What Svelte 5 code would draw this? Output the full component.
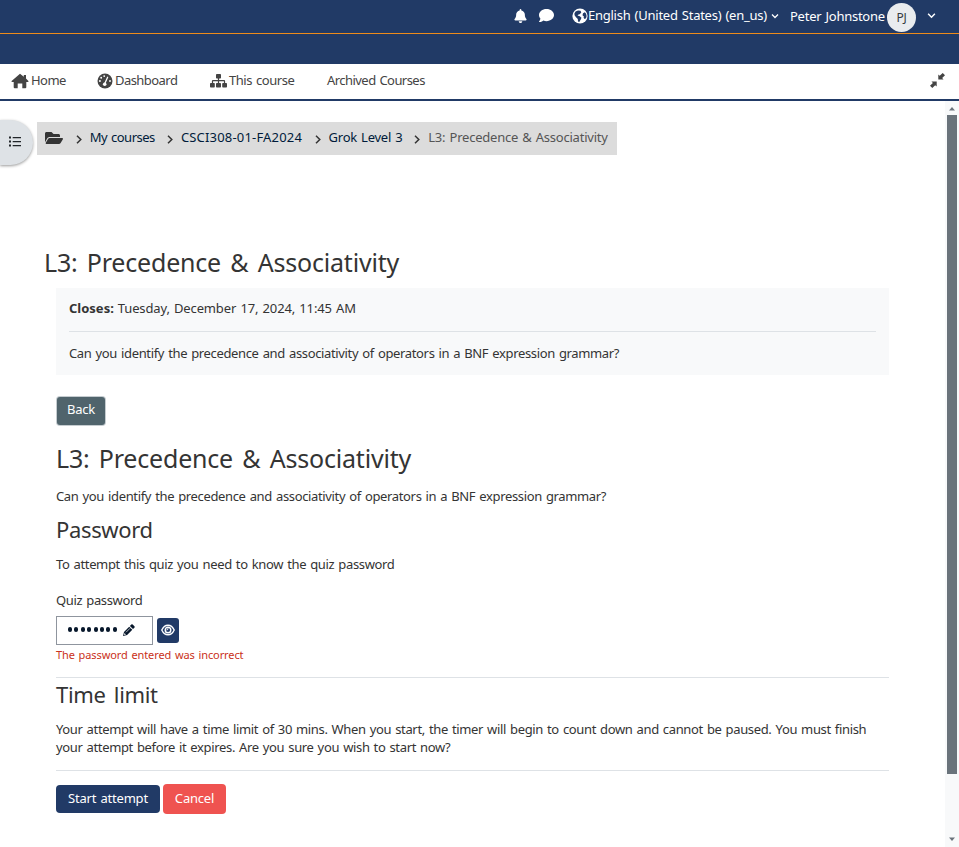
<script>
  const crumbs = [
    { label: 'My courses', width: 64.5, spacing: -0.5 },
    { label: 'CSCI308-01-FA2024', width: 121, spacing: 0.18 },
    { label: 'Grok Level 3', width: 73, spacing: -0.25 },
    { label: 'L3: Precedence & Associativity', width: 180, spacing: -0.22, current: true }
  ];
  const title = 'L3: Precedence & Associativity';
  const intro = 'Can you identify the precedence and associativity of operators in a BNF expression grammar?';
</script>

{#snippet chevron(size)}
  <svg width={size} height={size} viewBox="0 0 8 8" fill="none" stroke="currentColor" stroke-width="1.3"><path d="M1 2.5l3 3 3-3" /></svg>
{/snippet}

<div class="page">
  <header class="top">
    <svg class="bell" width="13" height="14" viewBox="0 0 448 512" fill="currentColor"><path d="M224 0c-17.7 0-32 14.3-32 32V51.2C119 66 64 130.6 64 208v18.8c0 47-17.3 92.4-48.5 127.6l-7.4 8.3c-8.4 9.4-10.4 22.9-5.3 34.4S19.4 416 32 416H416c12.6 0 24-7.4 29.2-18.9s3.1-25-5.3-34.4l-7.4-8.3C401.3 319.2 384 273.9 384 226.8V208c0-77.4-55-142-128-156.8V32c0-17.7-14.3-32-32-32zm45.3 493.3c12-12 18.7-28.3 18.7-45.3H160c0 17 6.7 33.3 18.7 45.3s28.3 18.7 45.3 18.7s33.3-6.7 45.3-18.7z" /></svg>
    <svg class="comment" width="15" height="15" viewBox="0 0 512 512" fill="currentColor"><path d="M512 240c0 114.9-114.6 208-256 208c-37.1 0-72.3-6.4-104.1-17.9c-11.9 8.7-31.3 20.6-54.3 30.6C73.6 471.1 44.7 480 16 480c-6.5 0-12.3-3.9-14.8-9.9c-2.5-6-1.1-12.8 3.4-17.4c6-6 13-14 21.7-28.7c10-16.6 19.5-38.4 21.4-62.9C17.7 326.8 0 285.1 0 240C0 125.1 114.6 32 256 32s256 93.1 256 208z" /></svg>
    <svg class="globe" width="16" height="16" viewBox="0 0 16 16"><circle cx="8" cy="8" r="7.6" fill="#fff" /><path fill="#213a66" d="M3.600 3.600L6 2.500l2.500.3.800 1.800-1.600 1.600-1.200.2-1 1.200 2.300.7 1.700 1.400-.6 1.600-1.600 2.700-1.300-.6-.2-2.300L4 9.300 2.600 7.200l-.2-1.600z" /><path fill="#213a66" d="M11 5.300l1.800-1 1.300 1.500.5 2.200-.5 2.300-1.500.8-1-1.300.3-1.300-1.400-1.200z" /></svg>
    <span class="lang">English (United States) (en_us)</span>
    {@render chevron(8)}
    <span class="user">Peter Johnstone</span>
    <span class="avatar">PJ</span>
    <span class="caret">{@render chevron(9)}</span>
  </header>
  <div class="band"></div>
  <nav>
    <a class="home" href="#home">
      <svg width="18" height="16" viewBox="0 0 18 16" fill="currentColor"><path d="M9 .7L.6 8q-.5 1 .5 1.100H2.700v5.100q0 1 1 1H6.700V10.500h4.600v4.700h3q1 0 1-1V9.100h1.600q1-.1.5-1.100L15 5.600V2h-2.200v1.700z" /></svg>
      <span>Home</span>
    </a>
    <a class="dash" href="#dashboard">
      <svg width="16" height="16" viewBox="0 0 16 16"><circle cx="8" cy="8" r="7.500" fill="currentColor" /><path d="M7.600 11L10.600 4.300" stroke="#fff" stroke-width="1.300" stroke-linecap="round" /><g fill="#fff"><circle cx="7.700" cy="11.300" r="1.800" /><circle cx="7.200" cy="3.100" r=".95" /><circle cx="4.200" cy="4.800" r=".95" /><circle cx="2.900" cy="8" r=".95" /><circle cx="13" cy="8" r=".95" /></g></svg>
      <span>Dashboard</span>
    </a>
    <a class="course" href="#course">
      <svg width="17" height="14" viewBox="0 0 17 14" fill="currentColor"><rect x="6" y="0" width="5" height="4.500" rx=".8" /><rect x="0" y="9" width="4.800" height="4.500" rx=".8" /><rect x="6" y="9" width="5" height="4.500" rx=".8" /><rect x="12.200" y="9" width="4.800" height="4.500" rx=".8" /><path d="M7.900 4h1.200v2.100h5q1 0 1 1V9.500h-1.200V7.300H9.100v2.200H7.900V7.300H3.100v2.200H1.900V7.100q0-1 1-1h5z" /></svg>
      <span>This course</span>
    </a>
    <a class="archive" href="#archive"><span>Archived Courses</span></a>
    <svg class="compress" width="15" height="15" viewBox="0 0 15 15" fill="currentColor"><path d="M8.300 1.500l1.400 1.300L12.700 0 15 2.200l-2.800 2.700L13.500 6.500H8.300zM1.500 8.500H6.700v5l-1.500-1.300L2.300 15 0 12.800l2.900-2.700z" /></svg>
  </nav>

  <div class="body">
    <main>
      <div class="crumbrow">
        <button class="drawer" aria-label="Open course index">
          <svg width="12" height="11" viewBox="0 0 12 11" fill="#212529"><path d="M0 .5h2v2H0zM0 4.500h2v2H0zM0 8.500h2v2H0zM3.700 1H12v1.200H3.700zM3.700 5H12v1.200H3.700zM3.700 9H12v1.200H3.700z" /></svg>
        </button>
        <div class="crumbs">
          <svg width="18" height="16" viewBox="0 0 576 512" fill="#343434"><path d="M572.694 292.093L500.270 416.248A63.997 63.997 0 0 1 444.989 448H45.025c-18.523 0-30.064-20.093-20.731-36.093l72.424-124.155A64 64 0 0 1 152 256h399.964c18.523 0 30.064 20.093 20.730 36.093zM152 224h328v-48c0-26.510-21.490-48-48-48H272l-64-64H48C21.490 64 0 85.490 0 112v278.046l69.077-118.418C86.214 242.250 117.989 224 152 224z" /></svg>
          {#each crumbs as c}
            <svg class="sep" width="6" height="9" viewBox="0 0 6 9" fill="none" stroke="#333" stroke-width="1.500"><path d="M1 .8l3.800 3.700L1 8.200" /></svg>
            <span class="crumb" class:current={c.current} style:width="{c.width}px" style:letter-spacing="{c.spacing}px">{c.label}</span>
          {/each}
        </div>
      </div>

      <h1>{title}</h1>
      <section class="info">
        <p class="dates"><strong>Closes:</strong> <span>Tuesday, December 17, 2024, 11:45 AM</span></p>
        <p class="copy">{intro}</p>
      </section>
      <div class="quiz">
        <button class="back">Back</button>
        <h2>{title}</h2>
        <p class="copy intro">{intro}</p>
        <h3>Password</h3>
        <p class="need">To attempt this quiz you need to know the quiz password</p>
        <p class="label">Quiz password</p>
        <div class="pwrow">
          <div class="field">
            <span class="dots">{#each Array(8) as _}<i></i>{/each}</span>
            <svg width="12" height="12" viewBox="0 0 12 12"><path fill="#07172b" d="M8.300.6q.7-.7 1.400 0l1.700 1.700q.6.7 0 1.400L10 5.100 6.900 2zM6.200 2.700l3.100 3.100-5.200 5.200L0 12l1-4.100z" /><path d="M3 8.300l4-4" stroke="#fff" stroke-width=".7" /><path d="M1.500 9l1.500 1.500-2 .5z" fill="#fff" /></svg>
          </div>
          <button class="eye" aria-label="Reveal password">
            <svg width="14" height="12" viewBox="0 0 14 12" fill="none" stroke="#fff" stroke-width="1.400"><path d="M.8 6Q3 1.200 7 1.200T13.200 6Q11 10.800 7 10.800T.8 6z" /><circle cx="7" cy="6" r="2.800" /><path d="M5.400 6q1.700.1 1.600-1.700" stroke-width="1" /></svg>
          </button>
        </div>
        <p class="error">The password entered was incorrect</p>
        <h3 class="ruled">Time limit</h3>
        <p class="limit">Your attempt will have a time limit of 30 mins. When you start, the timer will begin to count down and cannot be paused. You must finish<br /><span>your attempt before it expires. Are you sure you wish to start now?</span></p>
        <div class="actions">
          <button class="start">Start attempt</button>
          <button class="cancel">Cancel</button>
        </div>
      </div>
    </main>
    <div class="scroll">
      <svg width="6" height="4" viewBox="0 0 6 4"><path d="M3 0l3 3.500H0z" fill="#6a737b" /></svg>
      <div class="thumb"></div>
      <svg class="down" width="6" height="4" viewBox="0 0 6 4"><path d="M0 .5h6L3 4z" fill="#6a737b" /></svg>
    </div>
  </div>
</div>

<style>
  :global(body) { background: #fff; overflow: hidden; }
  .page { width: 959px; height: 847px; overflow: hidden; display: flex; flex-direction: column; font: 13px/18px "Noto Sans", sans-serif; letter-spacing: -.35px; word-spacing: 1px; color: #343434; white-space: nowrap; }
  .page * { box-sizing: border-box; }
  svg { flex: none; display: block; }
  p, h1, h2, h3 { margin: 0; font-weight: 400; }
  button { font: inherit; letter-spacing: -.2px; word-spacing: 1px; border: 0; padding: 0; color: #fff; border-radius: 4px; display: flex; justify-content: center; align-items: center; }
  .top { height: 34px; flex: none; background: #213a66; border-bottom: 1px solid #ee8b1a; color: #fff; display: flex; align-items: center; padding-left: 514px; letter-spacing: -.25px; }
  .top > :global(*) { margin-bottom: 2px; }
  .comment { margin-left: 12px; }
  .globe { margin-left: 18px; }
  .lang { width: 183px; padding-bottom: 1px; }
  .user { margin-left: 11px; width: 97px; }
  .avatar { width: 29px; height: 29px; border-radius: 50%; background: #e9ecef; color: #343a40; display: flex; align-items: center; justify-content: center; font-size: 12px; margin-bottom: 0; position: relative; top: 1px; }
  .caret { margin-left: 11px; }
  .band { height: 30px; flex: none; background: #213a66; }
  nav { height: 37px; flex: none; border-bottom: 2px solid #213a66; display: flex; align-items: center; padding: 0 14px 2px 11px; color: #444; letter-spacing: -.55px; }
  nav a { display: flex; align-items: center; color: inherit; text-decoration: none; gap: 2px; }
  nav a span { padding-bottom: 2px; }
  .home { width: 86px; }
  .dash { width: 113px; }
  .course { width: 117px; letter-spacing: -.45px; }
  .compress { margin-left: auto; }
  .body { flex: 1; display: flex; min-height: 0; }
  main { width: 945px; padding-top: 19px; }
  .crumbrow { display: flex; align-items: flex-start; height: 127px; }
  .drawer { width: 33px; height: 45px; border-radius: 0 23px 23px 0; background: #dee2e6; box-shadow: 0 1px 3px #0006; margin-right: 4px; padding: 0 3px 2px 0; }
  .crumbs { width: 580px; height: 33px; margin-top: 2px; background: #dcdcdc; display: flex; align-items: center; padding: 0 0 2px 8px; color: #001b3a; }
  .crumb { flex: none; padding-bottom: 2px; }
  .sep { margin: 3px 8px 0 12.700px; }
  .crumbs .current { color: #555; }
  h1, h2 { font-size: 25px; line-height: 30px; letter-spacing: -.2px; word-spacing: 3px; }
  h1 { margin-left: 44px; }
  .info { margin: 11px 56px 0; height: 87px; background: #f8f9fa; padding: 11px 13px; }
  .dates { border-bottom: 1px solid #dee2e6; height: 33px; margin-bottom: 12px; }
  .dates span { letter-spacing: -.14px; }
  .dates strong { letter-spacing: 0; }
  .quiz { margin: 22px 56px 0; }
  .back { width: 48px; height: 28px; background: #50646c; box-shadow: 0 0 0 1px #c5ccd0; padding-bottom: 4px; margin-left: 1px; border-radius: 3px; }
  h2 { margin-top: 18px; }
  .intro { margin-top: 14px; }
  h3 { font-size: 22px; line-height: 28px; margin-top: 10px; letter-spacing: -.35px; word-spacing: 3px; }
  .need { margin-top: 12px; }
  .label { margin-top: 18px; }
  .pwrow { display: flex; margin-top: 7px; height: 29px; gap: 4px; }
  .field { width: 97px; border: 1px solid #8f959e; display: flex; align-items: center; gap: 6px; padding: 0 0 2px 11px; }
  .dots { display: flex; gap: 2.300px; }
  .dots i { width: 4.100px; height: 4.100px; border-radius: 50%; background: #07172b; }
  .eye { width: 22px; height: 25px; margin-top: 2px; background: #213a66; padding-bottom: 2px; border-radius: 3px; }
  .error { font-size: 11px; line-height: 16px; margin-top: 2px; color: #ca3120; letter-spacing: -.1px; }
  .ruled { border-top: 1px solid #dee2e6; margin-top: 14px; padding-top: 2px; height: 32px; }
  .limit { border-bottom: 1px solid #dee2e6; margin-top: 11px; height: 51px; }
  .actions { display: flex; gap: 3px; margin-top: 13px; }
  .start { width: 104px; height: 28px; margin-top: 1px; background: #213a66; padding-bottom: 3px; }
  .cancel { width: 63px; height: 30px; background: #ef5350; padding-bottom: 3px; }
  .scroll { width: 14px; background: #f8f9fa; display: flex; flex-direction: column; align-items: center; padding: 6px 0 6px; }
  .thumb { width: 10px; height: 659px; background: #6a737b; margin-top: 4px; }
  .down { margin-top: auto; }
</style>
